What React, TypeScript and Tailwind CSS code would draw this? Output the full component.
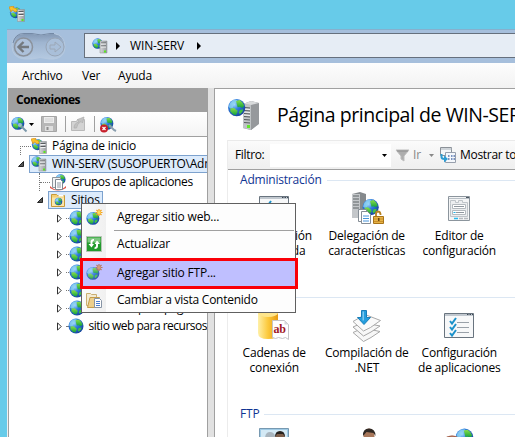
import type { ReactNode } from "react";

function Svg({ w, h, vb, children, className = "" }: { w: number; h: number; vb?: string; children: ReactNode; className?: string }) {
  return (
    <svg width={w} height={h} viewBox={vb ?? `0 0 ${w} ${h}`} className={`block shrink-0 ${className}`} fill="none">
      {children}
    </svg>
  );
}

function Defs() {
  return (
    <svg width="0" height="0" className="absolute">
      <defs>
        <radialGradient id="sea" cx="0.35" cy="0.3" r="0.8">
          <stop offset="0" stopColor="#a8dcff" />
          <stop offset="0.4" stopColor="#2f7ede" />
          <stop offset="1" stopColor="#123a94" />
        </radialGradient>
        <linearGradient id="land" x1="0" y1="0" x2="0" y2="1">
          <stop offset="0" stopColor="#8be04a" />
          <stop offset="1" stopColor="#10a03c" />
        </linearGradient>
        <linearGradient id="steel" x1="0" y1="0" x2="1" y2="0">
          <stop offset="0" stopColor="#d6d8da" />
          <stop offset="1" stopColor="#989ca0" />
        </linearGradient>
        <linearGradient id="gold" x1="0" y1="0" x2="1" y2="0">
          <stop offset="0" stopColor="#fff0a8" />
          <stop offset="0.5" stopColor="#fcc93c" />
          <stop offset="1" stopColor="#e79a10" />
        </linearGradient>
        <linearGradient id="pill" x1="0" y1="0" x2="0" y2="1">
          <stop offset="0" stopColor="#8398b4" />
          <stop offset="0.35" stopColor="#9fb5d0" />
          <stop offset="1" stopColor="#b4c9e1" />
        </linearGradient>
      </defs>
    </svg>
  );
}

function GlobeShape({ x = 0, y = 0, s = 1 }: { x?: number; y?: number; s?: number }) {
  return (
    <g transform={`translate(${x} ${y}) scale(${s})`}>
      <circle cx="8" cy="8" r="7.5" fill="url(#sea)" />
      <path d="M2.2 4.2 5 1.4 8.6 1l-.4 2.2-2.4 1.6L4.6 8l-2 .6L1 7.4z" fill="#8fd4f0" opacity=".75" />
      <path d="M7.5 2.2 10.6 1.4 13 3.4l1.6 3-1.8 1.8-2.2-1-1.8.4-.6-2.2z" fill="url(#land)" />
      <path d="M2.4 8.6l3.2-.4 2.6 2 .6 1.6-1.6 2.8-2.4-.8-2.2-2.6z" fill="url(#land)" />
      <path d="M10.8 10l2.8-.6-.6 2.2-2.2 2.2-1-1.6z" fill="#3fc343" />
    </g>
  );
}

const Globe = () => (
  <Svg w={16} h={16}>
    <GlobeShape />
  </Svg>
);

function Tower({ x, y, s = 1 }: { x: number; y: number; s?: number }) {
  return (
    <g transform={`translate(${x} ${y}) scale(${s})`}>
      <path d="M0 .5h7v12H0z" fill="url(#steel)" stroke="#8b8f92" strokeWidth=".5" />
      <path d="M1 2.500h5M1 5.500h5" stroke="#5a5e61" />
      <path d="M1 3.500h5M1 6.500h5" stroke="#f2f3f4" />
      <path d="M4 10h2v2H4z" fill="#58e81e" />
    </g>
  );
}

const SiteServer = () => (
  <Svg w={16} h={16}>
    <GlobeShape s={0.7} />
    <Tower x={8} y={2.5} />
  </Svg>
);

const StartPage = () => (
  <Svg w={16} h={16}>
    <GlobeShape x={0.5} y={0.5} s={0.75} />
    <path d="M0 1 5 0 4 1.5Q8 2 8.5 5L6 6Q5 4.500 3 4L2 6z" fill="#fbc12b" stroke="#d98a0a" strokeWidth=".6" />
    <Tower x={8.500} y={3} />
  </Svg>
);

const PagesIcon = () => (
  <Svg w={16} h={17}>
    <GlobeShape x={5} y={0} s={0.68} />
    <path d="M0 12q8 8 16 0v2q-8 5-16 0z" fill="#e05245" />
    <path d="M2.500 3.500h8v10h-8z" fill="#f1f3f5" stroke="#8f969c" />
    <path d="M5.500 5.500h5l2 2v8h-7z" fill="#fff" stroke="#7f878f" />
    <path d="M7 9h4M7 11h4M7 13h4" stroke="#8d98a3" />
  </Svg>
);

const SitesFolder = () => (
  <Svg w={16} h={16}>
    <path d="M1.500 2.500h5l1 1h7v11h-13z" fill="#f4cf76" stroke="#c99a38" />
    <path d="M2 5.500h12v8.500H2z" fill="#fbe6a8" />
    <path d="M8.500 3h5v1.500h-5z" fill="#fff" />
    <GlobeShape x={4.500} y={5.500} s={0.5} />
  </Svg>
);

const Lens = ({ cancel = false }: { cancel?: boolean }) => (
  <Svg w={17} h={17}>
    <GlobeShape x={0} y={0.5} s={0.86} />
    {cancel ? (
      <>
        <path d="m9 9 5 5 2 1" stroke="#8a9eae" strokeWidth="2" />
        <circle cx="4" cy="12.500" r="4" fill="#c71f2b" />
        <path d="m2.500 11 3 3m0-3-3 3" stroke="#fff" strokeWidth="1.200" />
      </>
    ) : (
      <>
        <circle cx="9" cy="9" r="2" fill="#b9cbd6" opacity=".8" />
        <path d="m10 10 3.500 3.500 2 2" stroke="#7b98aa" strokeWidth="2" />
      </>
    )}
  </Svg>
);

const Floppy = () => (
  <Svg w={16} h={16}>
    <path d="M.5.500h15v15H.5z" fill="#b7b7b7" stroke="#a5a5a5" />
    <path d="M3 1h10v6H3z" fill="#ededed" />
    <path d="M4 10h8v5H4z" fill="#dedede" />
    <path d="M5.500 11h2v3h-2z" fill="#8f8f8f" />
    <path d="M4 3h8M4 5h8" stroke="#d0d0d0" />
  </Svg>
);

const FolderUp = () => (
  <Svg w={15} h={16}>
    <path d="M.5 5.500h5l1-2h7v11H.5z" fill="#d3d3d3" stroke="#b9b9b9" />
    <path d="M3 12q0-5 5-6L6.500 3.500 13 1l-1.500 6-1.500-1.500Q6 7.500 5.500 12z" fill="#c2c2c2" stroke="#adadad" strokeWidth=".7" />
  </Svg>
);

const NewSite = ({ dim = false }: { dim?: boolean }) => (
  <Svg w={17} h={17}>
    <g opacity={dim ? 0.85 : 1}>
      <GlobeShape x={0} y={2.500} s={0.86} />
    </g>
    <path d="M13 0v7M9.500 3.500h7M10.500 1l5 5m0-5-5 5" stroke={dim ? "#b87962" : "#f3a01c"} strokeWidth="1.200" />
    <circle cx="13" cy="3.500" r="1.700" fill={dim ? "#d79a78" : "#ffdc57"} />
  </Svg>
);

const Refresh = () => (
  <Svg w={16} h={16}>
    <path d="M.5.500h15v15H.5z" fill="#229b2d" stroke="#b5c4b5" />
    <path d="M1.500 1.500h13v5h-13z" fill="#7bc77f" />
    <path d="M8 3Q4.500 3 4.500 6v2H2.500L5.500 11.500 8 8H6.500Q6 5 8 4.500zM8.500 13q3.500 0 3.500-3V8h2L11 4.500 8.500 8H10q.5 3-1.500 3.500z" fill="#fff" />
  </Svg>
);

const ContentView = () => (
  <Svg w={17} h={17}>
    <path d="M.5 1.500h4l1 1h5v11H.5z" fill="#f2ead2" stroke="#cbae70" />
    <path d="M1.500 15.500 4 5.500h9.500v10z" fill="#edcf8c" stroke="#c49c4c" />
    <path d="M8.500 6.500h5l2 2v7h-7z" fill="#fff" stroke="#8794a5" />
    <path d="M10 9.500h4M10 11.500h4M10 13.500h4" stroke="#4a7ed0" />
  </Svg>
);

const BigServer = () => (
  <Svg w={34} h={34}>
    <path d="M16 6 24 3l8 2v20l-8 7-8-2z" fill="#8d9194" />
    <path d="M16 6 24 7v25l-8-2z" fill="#bfc3c5" />
    <path d="M24 7 32 5v21l-8 6z" fill="#96999c" />
    <path d="m16 6 8-3 8 2-8 2z" fill="#d9dbdc" />
    <path d="M17 9.500l6 .5M17 12.500l6 .5M17 15.500l6 .5M17 18.500l6 .5M17 21.500l6 .5M17 24.500l6 .5" stroke="#54595c" />
    <path d="M17 11l6 .5M17 14l6 .5M17 17l6 .5" stroke="#f0f1f2" />
    <path d="M20 27h3v3h-3z" fill="#60e62a" />
    <GlobeShape x={0.500} y={0.500} s={1.15} />
  </Svg>
);

const Delegation = () => (
  <Svg w={34} h={34}>
    <path d="m2 2 8-2 6 2v24H2z" fill="#85898c" />
    <path d="M2 2h8v24H2z" fill="#c4c7ca" />
    <path d="M3 4h6M3 7h6M3 10h6M3 13h6M3 16h6" stroke="#5f6467" />
    <GlobeShape x={12} y={6.500} s={1.080} />
    <path d="M8.500 17.500h8v12h-8z" fill="#fff" stroke="#858d95" />
    <path d="M11.500 19.500h6l3 3v9h-9z" fill="#fff" stroke="#858d95" />
    <path d="M13 24h6M13 26.500h6M13 29h6" stroke="#4895da" />
    <path d="M26 25v-3q0-2.500 2-2.500t2.500 2.500v1" stroke="#b88323" strokeWidth="1.800" />
    <path d="M23.500 24.500h10v7h-10z" fill="#e7b447" stroke="#a87319" />
    <path d="M24 27h9M24 29.500h9" stroke="#c98f2b" />
    <path d="M28 26h1.500v3H28z" fill="#6b4611" />
  </Svg>
);

const ConfigEditor = () => (
  <Svg w={23} h={26}>
    <path d="M.5.500h21v24H.5z" fill="#f4f5f6" stroke="#8c959d" />
    <path d="M1 2.500h20" stroke="#b8bfc5" />
    <path d="M18 1.500h3" stroke="#4a5560" />
    <path d="M2.500 7.500v-3h5v2h3v-2h4v2h5v14h-17z" fill="#eceef0" stroke="#bfc4c9" />
    <path d="M4.500 8.500h13v4h-13zM4.500 14.500h13v4h-13z" fill="#fff" stroke="#b3b9be" />
    <path d="M6 10.500h10M8 16.500h8" stroke="#8f979f" />
    <path d="M5.500 16.500h2" stroke="#1ab0e8" />
    <path d="M6 22.500h4" stroke="#27b9ee" strokeWidth="1.500" />
    <path d="M11 22.500h4M16 22.500h4" stroke="#b5babf" strokeWidth="1.500" />
  </Svg>
);

const CheckWindow = () => (
  <Svg w={30} h={26}>
    <path d="M.5.500h29v24H.5z" fill="#f7f8f9" stroke="#69747f" />
    <path d="M1 2h28" stroke="#c1c8cf" strokeWidth="2" />
    <path d="M23 1.500h1.500M25.500 1.500H27M28 1.500h1" stroke="#3b4753" />
    <path d="m6 8 2 2.500L12 5M6 14l2 2.500 4-5.500M6 20l2 2.500 4-5.500" stroke="#1b91ca" strokeWidth="2" />
    <path d="M13 9.500h12M13 14.500h12M13 19.500h12" stroke="#99a1a9" />
  </Svg>
);

const Connection = () => (
  <Svg w={32} h={34}>
    <path d="M0 4v20q0 6 10 6t10-6V4z" fill="url(#gold)" />
    <ellipse cx="10" cy="4" rx="10" ry="4" fill="#ffe68c" />
    <path d="M14.500 11.500h12l4 4v15l-3-2-3 1-4-1-3 1-3-1z" fill="#fff" stroke="#c4c4c8" />
    <path d="m26.500 11.500 4 4h-4z" fill="#d7d7dc" />
    <text x="15.500" y="24" fontFamily="Liberation Serif, serif" fontWeight="700" fontSize="12" fill="#a11824">ab</text>
  </Svg>
);

const Layers = () => (
  <Svg w={32} h={33}>
    <path d="m2 22.500 10-4.500 17 3.500-9 6-7.500 4z" fill="#f7f7f7" stroke="#a8a8a8" />
    <path d="m2 17 10-4.500 17 3.500-9 6-7.500 4z" fill="#f7f7f7" stroke="#a5a5a5" />
    <path d="m2 11.500 12-7 15.500 6-10 7-7 3.500z" fill="#fafafa" stroke="#a9a9a9" />
    <path d="M10.500.500h5v7h4l-6.500 7-6.500-7h4z" fill="#239ddd" stroke="#197eb9" />
    <path d="M11.500 1.500h1.500v9h-1.500z" fill="#7bc8ef" />
  </Svg>
);

const Auth = () => (
  <Svg w={30} h={30}>
    <path d="M.5.500h29v29H.5z" fill="#9fcbe6" stroke="#7799b1" />
    <path d="M2 2h26v26H2z" fill="#d3e9f5" />
    <path d="M6 30V11Q6 4 11 4q4 0 5 4v22z" fill="#a9b5be" />
    <ellipse cx="21" cy="10" rx="5" ry="6" fill="#7d5d49" />
    <path d="M16 9q0-6 5-6t5 6l-2-3h-6z" fill="#26211e" />
  </Svg>
);

const Person = () => (
  <Svg w={20} h={30}>
    <path d="M1 20q0-6 9-6t9 6v10H1z" fill="#b8c8cb" />
    <ellipse cx="12" cy="8" rx="5.500" ry="7.500" fill="#a8775a" />
    <path d="M6 8Q5.500.500 12 .5T18.500 8l-2-3-7-1z" fill="#2f2823" />
  </Svg>
);

const HandGlobe = () => (
  <Svg w={32} h={30}>
    <GlobeShape x={12} y={0} s={1.180} />
    <path d="M1 11q4-4 11-3l6 3-3 4H1z" fill="#c98a72" />
    <path d="M2 10q7-4 14 0" stroke="#9d5b47" />
  </Svg>
);

const Funnel = () => (
  <Svg w={15} h={13}>
    <path d="M1 1h13L9 7v5l-3-2V7z" fill="#adadad" stroke="#bdbdbd" />
    <path d="M2 2h11" stroke="#8d8d8d" />
  </Svg>
);

const ShowAll = () => (
  <Svg w={16} h={16}>
    <path d="M.5.500h11v8H.5z" fill="#f4f6f8" stroke="#8b9198" />
    <path d="M1 2h11" stroke="#aab3bb" />
    <path d="M5.500 5.500h10v10h-10z" fill="#f5f8fc" stroke="#98a0ad" />
    <path d="M8 9h1.500M11 9h1.500M13.500 9H15M8 12h1.500M11 12h1.500M13.500 12H15" stroke="#5170aa" strokeWidth="1.300" />
    <path d="M1.500 7v3q0 2 3 2" stroke="#2d9bd0" strokeWidth="2" />
    <path d="m4 8.500 4 3.500-4 3.500z" fill="#2b9dd5" />
  </Svg>
);

const Caret = ({ color = "#000" }: { color?: string }) => (
  <Svg w={5} h={3}>
    <path d="M0 0h5L2.500 3z" fill={color} />
  </Svg>
);

const Crumb = () => (
  <Svg w={4} h={8}>
    <path d="M0 0v8l4-4z" fill="#000" />
  </Svg>
);

const OpenArrow = () => (
  <Svg w={6} h={6}>
    <path d="M5.500.500v5h-5z" fill="#555" stroke="#262626" />
  </Svg>
);

const ClosedArrow = () => (
  <Svg w={5} h={9}>
    <path d="M.5.800v7.400l3.700-3.700z" fill="#fff" stroke="#333" />
  </Svg>
);

function NavButtons() {
  return (
    <Svg w={56} h={29}>
      <path d="M13 1.500h8q9 3 18 0h4q11 2 11 13t-11 12.500h-5q-9-3-17 0h-8Q1 25.500 1 14T13 1.500z" fill="url(#pill)" stroke="#b6c9df" />
      <path d="M2 11Q4 1.500 13 1.500h8q9 3 18 0h4" stroke="#7489a5" />
      <circle cx="12.500" cy="15" r="9" fill="#adc1da" stroke="#8b929c" strokeWidth="1.500" />
      <path d="M18 15H8m4.500-5-5 5 5 5" stroke="#74797f" strokeWidth="2.400" />
      <circle cx="44" cy="15" r="9" fill="#a9bfd9" stroke="#98a5b6" />
      <path d="M39 13h5v-3l6 5-6 5v-3h-5z" stroke="#9ca8b7" />
    </Svg>
  );
}

function Feature({ icon, lines }: { icon: ReactNode; lines: string[] }) {
  return (
    <div className="flex w-[92.500px] shrink-0 flex-col items-center">
      <div className="flex h-[34px] items-center justify-center">{icon}</div>
      <div className="mt-[2px] text-center leading-[15px]">
        {lines.map((l) => (
          <div key={l} className="whitespace-nowrap">{l}</div>
        ))}
      </div>
    </div>
  );
}

function GroupTitle({ children }: { children: string }) {
  return (
    <div className="flex h-4 items-center gap-[5px] pl-[12px] leading-4 text-[#0f3492]">
      {children}
      <div className="h-px flex-1 bg-[#dce7f3]" />
    </div>
  );
}

function MenuItem({ icon, label, hot = false }: { icon: ReactNode; label: string; hot?: boolean }) {
  return (
    <div
      className={
        hot
          ? "relative -mx-[2px] mt-px flex h-[31px] w-[218px] shrink-0 items-center border-[3px] border-[#fa0008] bg-[#bfbfff] pb-[2px] pl-[3px]"
          : "flex h-[26px] shrink-0 items-center pl-1"
      }
    >
      <div className="flex w-[31px] shrink-0 items-center">{icon}</div>
      <span className="whitespace-nowrap">{label}</span>
    </div>
  );
}

const siteNames = ["Default Web Site", "sitio web 1", "sitio web 2", "sitio web 3", "sitio web 4", "sitio web para pagina", "sitio web para recursos"];

export default function App() {
  return (
    <div className="relative flex h-[437px] w-[515px] flex-col overflow-hidden bg-[#67cbe9] font-['Open_Sans','Noto_Sans',sans-serif] text-[12px] tracking-[-0.200px] text-black">
      <Defs />
      <header className="flex h-[29px] shrink-0 items-start pl-[9px] pt-[6px]">
        <StartPage />
      </header>
      <div className="ml-[7px] flex min-h-0 flex-1 flex-col bg-[#f0f0f0]">
        <div className="flex h-[34px] shrink-0 items-start border-t border-[#86b0cd] bg-[#a6bfdc]">
          <div className="ml-1 mt-[2px]"><NavButtons /></div>
          <div className="ml-[17px] mt-[3px] flex h-[25px] flex-1 items-center border-y border-l border-[#66707d] bg-[#e6edf5] pl-[7px]">
            <SiteServer />
            <div className="ml-2"><Crumb /></div>
            <span className="ml-[10px] w-[55px] whitespace-nowrap tracking-[-0.150px]">WIN-SERV</span>
            <div className="ml-[12px]"><Crumb /></div>
          </div>
        </div>
        <nav className="flex h-[25px] shrink-0 items-center bg-linear-to-b from-[#fdfdfd] to-[#f2f2f2] pl-[15px]">
          <span className="w-[60px]">Archivo</span>
          <span className="w-[36px]">Ver</span>
          <span>Ayuda</span>
        </nav>
        <div className="flex min-h-0 flex-1">
          <aside className="ml-px flex w-[200px] shrink-0 flex-col border-x border-[#a0a0a0] bg-white">
            <div className="flex h-[24px] shrink-0 items-center bg-[#a0a0a0] pl-[7px] font-bold tracking-[-0.500px]">Conexiones</div>
            <div className="flex h-[25px] shrink-0 items-center border-b border-[#a0a0a0] bg-linear-to-b from-white to-[#f4f4f4] pl-[2px]">
              <Lens />
              <div className="ml-px"><Caret /></div>
              <div className="ml-[7px]"><Floppy /></div>
              <div className="ml-2 h-4 w-px bg-[#a0a0a0]" />
              <div className="ml-[5px]"><FolderUp /></div>
              <div className="ml-[8px] h-4 w-px bg-[#a0a0a0]" />
              <div className="ml-[5px]"><Lens cancel /></div>
            </div>
            <div className="flex flex-col overflow-hidden whitespace-nowrap">
              <div className="flex h-[18px] shrink-0 items-center pl-[11px]">
                <div className="mt-[9px] h-[9px] w-[11px] border-l border-t border-dotted border-[#777]" />
                <StartPage />
                <span className="ml-[5px]">Página de inicio</span>
              </div>
              <div className="flex h-[18px] shrink-0 items-center pl-[9px]">
                <OpenArrow />
                <div className="ml-[5px] flex h-[18px] w-[181px] items-center border border-r-0 border-[#7da2ce] bg-[#dcebfc] pl-px">
                  <SiteServer />
                  <span className="ml-[5px] tracking-[-0.270px]">WIN-SERV (SUSOPUERTO\Administrador)</span>
                </div>
              </div>
              <div className="flex h-[18px] shrink-0 items-center pl-[30px]">
                <div className="flex h-[18px] w-[11px] items-center border-l border-dotted border-[#777]">
                  <div className="w-full border-t border-dotted border-[#777]" />
                </div>
                <PagesIcon />
                <span className="ml-[5px] tracking-[-0.370px]">Grupos de aplicaciones</span>
              </div>
              <div className="flex h-[18px] shrink-0 items-center pl-[28px]">
                <OpenArrow />
                <div className="ml-[5px] flex h-[18px] w-[55px] items-center border border-[#7da2ce] bg-[#dcebfc] pl-px">
                  <SitesFolder />
                  <span className="ml-[5px]">Sitios</span>
                </div>
              </div>
              {siteNames.map((name) => (
                <div key={name} className="flex h-[18px] shrink-0 items-center pl-[48px]">
                  <ClosedArrow />
                  <div className="ml-1 w-[3px] border-t border-dotted border-[#777]" />
                  <Globe />
                  <span className="ml-[5px] tracking-[-0.500px]">{name}</span>
                </div>
              ))}
            </div>
          </aside>
          <div className="w-[6px] shrink-0 bg-[#e1e1e1]" />
          <main className="flex min-w-0 flex-1 flex-col overflow-hidden border-l border-t border-[#a0a0a0] bg-white pl-[12px]">
            <div className="flex h-[51px] shrink-0 items-center">
              <BigServer />
              <h1 className="ml-[16px] whitespace-nowrap text-[19.500px] tracking-[-0.450px]">Página principal de WIN-SERV</h1>
            </div>
            <div className="flex min-h-0 flex-1 flex-col border-l border-[#ececec]">
              <div className="flex h-[30px] shrink-0 items-center whitespace-nowrap border-b border-t border-b-[#a0a0a0] border-t-[#eaeaea] bg-linear-to-b from-[#fbfbfb] to-[#efefef] pl-[7px]">
                <span className="w-[35px] shrink-0 tracking-[-0.350px]">Filtro:</span>
                <div className="flex h-[23px] w-[121px] shrink-0 items-center justify-end bg-white pr-1"><Caret /></div>
                <div className="ml-1 shrink-0"><Funnel /></div>
                <span className="ml-[3px] w-[16px] shrink-0 text-[#888]">Ir</span>
                <Caret color="#888" />
                <div className="ml-[6px] shrink-0"><ShowAll /></div>
                <span className="ml-[4px] shrink-0 tracking-[-0.300px]">Mostrar todo</span>
              </div>
              <div className="pt-[2px]">
                <GroupTitle>Administración</GroupTitle>
              </div>
              <div className="mt-[4px] flex h-[97px] shrink-0">
                <Feature icon={<CheckWindow />} lines={["Configuración", "compartida"]} />
                <Feature icon={<Delegation />} lines={["Delegación de", "características"]} />
                <Feature icon={<ConfigEditor />} lines={["Editor de", "configuración"]} />
              </div>
              <GroupTitle>ASP.NET</GroupTitle>
              <div className="mt-[4px] flex h-[97px] shrink-0">
                <Feature icon={<Connection />} lines={["Cadenas de", "conexión"]} />
                <Feature icon={<Layers />} lines={["Compilación de", ".NET"]} />
                <Feature icon={<CheckWindow />} lines={["Configuración", "de aplicaciones"]} />
              </div>
              <GroupTitle>FTP</GroupTitle>
              <div className="mt-[4px] flex shrink-0">
                <Feature icon={<Auth />} lines={["Autenticación"]} />
                <Feature icon={<Person />} lines={["Aislamiento"]} />
                <Feature icon={<HandGlobe />} lines={["Compatibilidad"]} />
              </div>
            </div>
          </main>
        </div>
      </div>
      <div className="absolute left-[81px] top-[203px] flex h-[110px] w-[215px] flex-col border border-[#606060] bg-[linear-gradient(90deg,#fafafa_0px,#f0f0f0_24px,#fdfdfd_24px)]">
        <MenuItem icon={<NewSite />} label="Agregar sitio web..." />
        <div className="ml-8 mr-px h-px shrink-0 bg-[#a0a0a0]" />
        <MenuItem icon={<Refresh />} label="Actualizar" />
        <MenuItem icon={<NewSite dim />} label="Agregar sitio FTP..." hot />
        <div className="-mt-[2px] tracking-[-0.260px]"><MenuItem icon={<ContentView />} label="Cambiar a vista Contenido" /></div>
      </div>
    </div>
  );
}
